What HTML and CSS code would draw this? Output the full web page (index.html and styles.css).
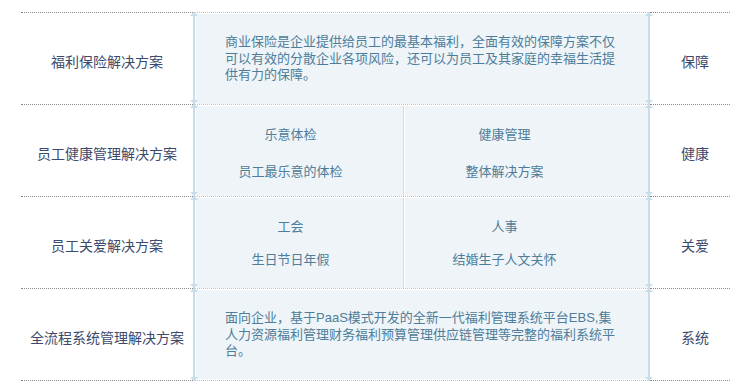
FILE: index.html
```html
<!DOCTYPE html>
<html lang="zh-CN">
<head>
<meta charset="utf-8">
<title>福利解决方案</title>
<link rel="stylesheet" href="styles.css">
</head>
<body>
<div class="table">
  <div class="row">
    <div class="label">福利保险解决方案</div>
    <div class="rule"></div>
    <div class="panel"><div class="fill text"><p>商业保险是企业提供给员工的最基本福利，全面有效的保障方案不仅<br>可以有效的分散企业各项风险，还可以为员工及其家庭的幸福生活提<br>供有力的保障。</p></div></div>
    <div class="rule"></div>
    <div class="tag">保障</div>
  </div>
  <div class="row">
    <div class="label">员工健康管理解决方案</div>
    <div class="rule"></div>
    <div class="panel"><div class="fill split">
      <div class="cell cell-left gap-wide"><span>乐意体检</span><span>员工最乐意的体检</span></div>
      <div class="divider"></div>
      <div class="cell cell-right gap-wide"><span>健康管理</span><span>整体解决方案</span></div>
    </div></div>
    <div class="rule"></div>
    <div class="tag">健康</div>
  </div>
  <div class="row">
    <div class="label">员工关爱解决方案</div>
    <div class="rule"></div>
    <div class="panel"><div class="fill split">
      <div class="cell cell-left gap-narrow"><span>工会</span><span>生日节日年假</span></div>
      <div class="divider"></div>
      <div class="cell cell-right gap-narrow"><span>人事</span><span>结婚生子人文关怀</span></div>
    </div></div>
    <div class="rule"></div>
    <div class="tag">关爱</div>
  </div>
  <div class="row last">
    <div class="label">全流程系统管理解决方案</div>
    <div class="rule"></div>
    <div class="panel"><div class="fill text"><p>面向企业，基于PaaS模式开发的全新一代福利管理系统平台EBS,集<br>人力资源福利管理财务福利预算管理供应链管理等完整的福利系统平<br>台。</p></div></div>
    <div class="rule"></div>
    <div class="tag">系统</div>
  </div>
</div>
</body>
</html>
```

FILE: styles.css
```css
* { box-sizing: border-box; }
html, body { margin: 0; padding: 0; background: #ffffff; }
body {
  font-family: "Liberation Sans", "Noto Sans CJK SC", sans-serif;
  -webkit-font-smoothing: antialiased;
}
.table {
  margin: 12px 0 0 21px;
  width: 709px;
}
.row {
  display: flex;
  height: 92px;
}
.row.last { height: 93px; }

.label, .tag {
  border-top: 1px dotted #8a8a8a;
  display: flex;
  align-items: center;
  justify-content: center;
  padding-top: 5px;
  font-size: 14px;
  color: #3b4a6d;
}
.label { width: 172px; }
.tag { flex: 1; padding-left: 10px; }
.last .label, .last .tag { border-bottom: 1px dotted #8a8a8a; }

.rule {
  width: 2px;
  background: #c7dde9;
  position: relative;
}
.rule::before, .rule::after {
  content: "";
  position: absolute;
  left: -3px;
  width: 0; height: 0;
  border-left: 4px solid transparent;
  border-right: 4px solid transparent;
}
.rule::before { top: 0; border-bottom: 4px solid #c7dde9; }
.rule::after { bottom: 0; border-top: 4px solid #c7dde9; }

.panel {
  width: 453px;
  border-top: 1px dotted #a6cde1;
  padding: 1px 0 0 1px;
  display: flex;
}
.last .panel { border-bottom: 1px dotted #a6cde1; padding-bottom: 1px; }
.fill {
  flex: 1;
  background: #eef4f8;
}
.text { padding: 20px 0 0 29px; }
.text p {
  margin: 0;
  font-size: 13px;
  line-height: 16.5px;
  color: #4d7d9a;
  white-space: nowrap;
}
.split { display: flex; }
.cell {
  display: flex;
  flex-direction: column;
  align-items: center;
  justify-content: center;
  font-size: 13px;
  line-height: 17px;
  color: #4d7d9a;
}
.cell-left { width: 207px; padding-right: 18px; }
.cell-right { flex: 1; padding-right: 44px; }
.gap-wide { gap: 20px; padding-top: 4px; }
.gap-narrow { gap: 16px; }
.divider {
  width: 2px;
  border-left: 1px solid #c7dde9;
  background: #ffffff;
}
```
